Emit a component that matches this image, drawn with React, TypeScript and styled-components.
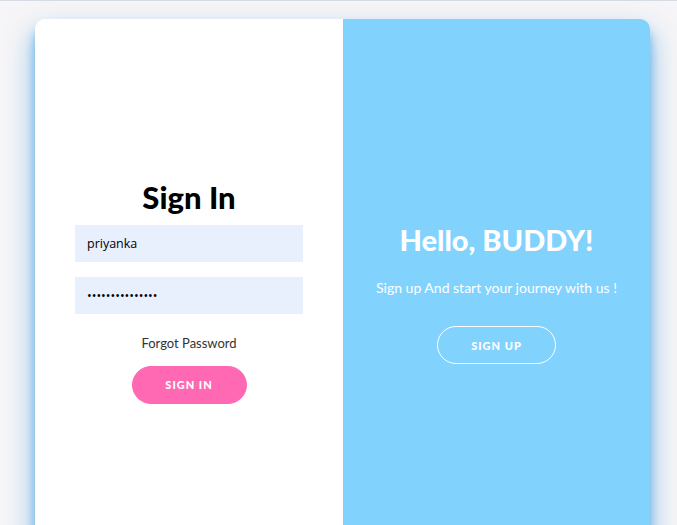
import React from "react";
import styled, { createGlobalStyle } from "styled-components";

const GlobalStyle = createGlobalStyle`
  * { box-sizing: border-box; }
  html, body { margin: 0; padding: 0; }
  body {
    background: #f6f5f7;
    font-family: "Lato", "Open Sans", sans-serif;
    overflow: hidden;
  }
`;

const Page = styled.div`
  min-height: 525px;
  border-top: 1px solid #d6dae2;
  padding: 18px 27px 0 35px;
`;

const Card = styled.div`
  width: 615px;
  height: 544px;
  border-radius: 10px;
  overflow: hidden;
  display: grid;
  grid-template-columns: 308px 307px;
  box-shadow: 0 14px 28px rgba(10, 140, 225, 0.5), 0 10px 10px rgba(10, 130, 215, 0.45);
`;

const Panel = styled.div<{ $variant: "light" | "blue" }>`
  display: flex;
  flex-direction: column;
  align-items: center;
  justify-content: center;
  text-align: center;
  padding: ${(p) => (p.$variant === "blue" ? "4px 40px 0" : "0 40px")};
  background: ${(p) => (p.$variant === "blue" ? "#81d3fe" : "#ffffff")};
  color: ${(p) => (p.$variant === "blue" ? "#ffffff" : "#000000")};
`;

const Title = styled.h1<{ $size?: number }>`
  margin: 0;
  font-size: ${(p) => p.$size ?? 31}px;
  font-weight: 900;
  line-height: 36px;
`;

const Input = styled.input`
  width: 228px;
  height: 37px;
  border: none;
  outline: none;
  background: #e8f0fe;
  padding: 0 12px;
  font-family: "Open Sans", sans-serif;
  font-size: 12.5px;
  color: #000;
  margin-top: ${(p) => (p.type === "password" ? "15px" : "10px")};
`;

const LinkText = styled.a`
  margin-top: 21px;
  font-size: 13px;
  font-weight: 400;
  color: #333;
  text-decoration: none;
`;

const Button = styled.button<{ $ghost?: boolean }>`
  height: 38px;
  border-radius: 20px;
  border: 1px solid ${(p) => (p.$ghost ? "#ffffff" : "#ff69b4")};
  background: ${(p) => (p.$ghost ? "transparent" : "#ff69b4")};
  color: #fff;
  font-family: "Lato", sans-serif;
  font-size: 11px;
  font-weight: 900;
  letter-spacing: 1px;
  text-transform: uppercase;
  white-space: nowrap;
  padding: 0;
  margin-top: ${(p) => (p.$ghost ? "28px" : "15px")};
  width: ${(p) => (p.$ghost ? "119px" : "115px")};
`;

const Subtitle = styled.p`
  margin: 20px 0 0;
  font-size: 14px;
  font-weight: 400;
  line-height: 20px;
  white-space: nowrap;
`;

export default function App() {
  return (
    <>
      <GlobalStyle />
      <Page>
        <Card>
          <Panel $variant="light">
            <Title>Sign In</Title>
            <Input type="text" defaultValue="priyanka" />
            <Input type="password" defaultValue="priyankapriyank" />
            <LinkText href="#">Forgot Password</LinkText>
            <Button>Sign In</Button>
          </Panel>
          <Panel $variant="blue">
            <Title $size={29}>Hello, BUDDY!</Title>
            <Subtitle>Sign up And start your journey with us !</Subtitle>
            <Button $ghost>Sign Up</Button>
          </Panel>
        </Card>
      </Page>
    </>
  );
}
